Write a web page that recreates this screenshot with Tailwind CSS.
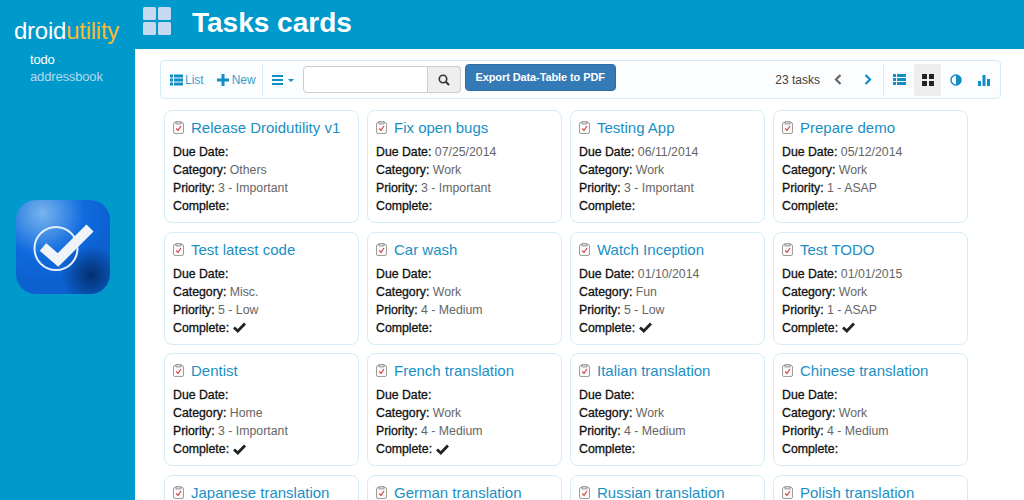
<!DOCTYPE html>
<html lang="en">
  <head>
    <meta charset="UTF-8" />
    <title>Tasks cards</title>
    <script src="https://cdn.jsdelivr.net/npm/@tailwindcss/browser@4"></script>
  </head>
  <body class="h-[500px] overflow-hidden bg-[#0099cc] font-['Liberation_Sans',Arial,sans-serif] text-[13px] text-[#333]">
    <div class="flex h-[500px]">

      <!-- Sidebar -->
      <aside class="w-[135px] shrink-0 flex flex-col">
        <div class="pl-[14px] pt-[16px] text-[24px] leading-[30px] tracking-[-0.25px] text-white">droid<span class="text-[#f5b936]">utility</span></div>
        <div class="pl-[30px] pt-[5px] text-[13px] leading-[17px] tracking-[-0.15px]">
          <div class="text-white">todo</div>
          <div class="text-[#b5d9ee]">addressbook</div>
        </div>
        <!-- App icon -->
        <div class="pl-[16px] pt-[115px]">
          <svg width="94" height="94" viewBox="0 0 94 94">
            <defs>
              <radialGradient id="shine" cx="0.28" cy="0.14" r="0.75">
                <stop offset="0" stop-color="#78b4ee" />
                <stop offset="0.6" stop-color="#0f6bde" />
                <stop offset="1" stop-color="#0c60d0" />
              </radialGradient>
              <radialGradient id="shade" cx="0.8" cy="0.8" r="0.32">
                <stop offset="0" stop-color="#02275f" stop-opacity="0.85" />
                <stop offset="1" stop-color="#02275f" stop-opacity="0" />
              </radialGradient>
            </defs>
            <rect width="94" height="94" rx="20" fill="url(#shine)" />
            <rect width="94" height="94" rx="20" fill="url(#shade)" />
            <circle cx="40" cy="48.500" r="21.500" fill="none" stroke="#e4eefa" stroke-width="2" />
            <path d="M27 47 L42 60 L74 28" fill="none" stroke="#f0f3f7" stroke-width="10" />
          </svg>
        </div>
      </aside>

      <div class="flex-1 min-w-0 flex flex-col">
        <!-- Header -->
        <header class="h-[49px] shrink-0 flex items-start pl-[8px] pt-[7px]">
          <svg width="28" height="28" viewBox="0 0 28 28" fill="#c6d9f0">
            <rect x="0" y="0" width="13" height="13" rx="1.500" />
            <rect x="15" y="0" width="13" height="13" rx="1.500" />
            <rect x="0" y="15" width="13" height="13" rx="1.500" />
            <rect x="15" y="15" width="13" height="13" rx="1.500" />
          </svg>
          <h1 class="ml-[21px] text-[28px] leading-[32px] font-bold text-white">Tasks cards</h1>
        </header>

        <main class="flex-1 bg-white overflow-hidden pl-[25px] pt-[11px]">
          <!-- Toolbar -->
          <div class="w-[841px] h-[39px] flex items-center border border-[#d3edf6] rounded-[4px] bg-[#fbfdfe] text-[#0f8fc6]">
            <div class="flex items-center pl-[9px] h-full">
              <svg width="13" height="12" viewBox="0 0 13 12" fill="#0f8fc6"><rect y="0.500" width="3" height="3"/><rect y="4.500" width="3" height="3"/><rect y="8.500" width="3" height="3"/><rect x="4" y="0.500" width="9" height="3"/><rect x="4" y="4.500" width="9" height="3"/><rect x="4" y="8.500" width="9" height="3"/></svg>
              <span class="ml-[2px] text-[12px] text-[#3d9fcc]">List</span>
              <svg class="ml-[13px]" width="12" height="12" viewBox="0 0 12 12" fill="#0f8fc6"><rect x="4.500" y="0" width="3" height="12"/><rect x="0" y="4.500" width="12" height="3"/></svg>
              <span class="ml-[3px] text-[12px] text-[#3d9fcc]">New</span>
            </div>
            <div class="ml-[6px] w-px h-[32px] bg-[#d3edf6]"></div>
            <div class="flex items-center ml-[9px]">
              <svg width="11" height="10" viewBox="0 0 11 10" fill="#0f8fc6"><rect width="11" height="2"/><rect y="4" width="11" height="2"/><rect y="8" width="11" height="2"/></svg>
              <svg class="ml-[5px] mt-[2px]" width="6" height="3" viewBox="0 0 6 3" fill="#0f8fc6"><path d="M0 0H6L3 3Z"/></svg>
            </div>
            <div class="ml-[9px] flex h-[27px] w-[158px]">
              <div class="w-[125px] bg-white border border-[#ccc] rounded-l-[4px]"></div>
              <div class="flex-1 flex items-center justify-center bg-[#eee] border border-l-0 border-[#ccc] rounded-r-[4px]">
                <svg width="12" height="12" viewBox="0 0 12 12" fill="none" stroke="#333" stroke-width="1.600"><circle cx="5" cy="5" r="3.700"/><path d="M7.800 7.800L11 11" stroke-width="2"/></svg>
              </div>
            </div>
            <button class="ml-[4px] mb-[5px] h-[27px] w-[151px] bg-[#337ab7] border border-[#2e6da4] rounded-[4px] text-[11px] tracking-[-0.1px] font-bold text-white">Export Data-Table to PDF</button>

            <span class="ml-auto text-[12px] text-[#444]">23 tasks</span>
            <svg class="ml-[14px]" width="8" height="11" viewBox="0 0 8 11" fill="none" stroke="#666" stroke-width="2.200"><path d="M6.500 1L2 5.500L6.500 10"/></svg>
            <svg class="ml-[22px]" width="8" height="11" viewBox="0 0 8 11" fill="none" stroke="#0f8fc6" stroke-width="2.200"><path d="M1.500 1L6 5.500L1.500 10"/></svg>
            <div class="ml-[11px] w-px h-[32px] bg-[#d3edf6]"></div>
            <div class="w-[30px] h-[32px] flex items-center justify-center">
              <svg width="13" height="11" viewBox="0 0 13 11" fill="#0f8fc6"><rect y="0" width="3" height="3"/><rect y="4" width="3" height="3"/><rect y="8" width="3" height="3"/><rect x="4" y="0" width="9" height="3"/><rect x="4" y="4" width="9" height="3"/><rect x="4" y="8" width="9" height="3"/></svg>
            </div>
            <div class="w-[27px] h-[32px] flex items-center justify-center bg-[#eee] rounded-[3px]">
              <svg width="12" height="12" viewBox="0 0 12 12" fill="#222"><rect width="5" height="5"/><rect x="7" width="5" height="5"/><rect y="7" width="5" height="5"/><rect x="7" y="7" width="5" height="5"/></svg>
            </div>
            <div class="w-[29px] h-[32px] flex items-center justify-center">
              <svg width="12" height="12" viewBox="0 0 12 12"><circle cx="6" cy="6" r="5" fill="none" stroke="#0f8fc6" stroke-width="1.500"/><path d="M6 1A5 5 0 0 1 6 11Z" fill="#0f8fc6"/></svg>
            </div>
            <div class="w-[28px] h-[32px] flex items-center justify-center mr-[2px]">
              <svg width="12" height="12" viewBox="0 0 12 12" fill="#0f8fc6"><rect x="0" y="7" width="3" height="5"/><rect x="4.500" y="1" width="3" height="11"/><rect x="9" y="5" width="3" height="7"/></svg>
            </div>
          </div>

          <!-- Cards -->
          <div id="cards" class="grid grid-cols-[repeat(4,195px)] gap-x-[8px] gap-y-[8.500px] pl-[4px] pt-[11px]"></div>
        </main>
      </div>
    </div>

    <script>
      // title, due date, category, priority, complete
      const tasks = [
        ["Release Droidutility v1", "", "Others", "3 - Important", false],
        ["Fix open bugs", "07/25/2014", "Work", "3 - Important", false],
        ["Testing App", "06/11/2014", "Work", "3 - Important", false],
        ["Prepare demo", "05/12/2014", "Work", "1 - ASAP", false],
        ["Test latest code", "", "Misc.", "5 - Low", true],
        ["Car wash", "", "Work", "4 - Medium", false],
        ["Watch Inception", "01/10/2014", "Fun", "5 - Low", true],
        ["Test TODO", "01/01/2015", "Work", "1 - ASAP", true],
        ["Dentist", "", "Home", "3 - Important", true],
        ["French translation", "", "Work", "4 - Medium", true],
        ["Italian translation", "", "Work", "4 - Medium", false],
        ["Chinese translation", "", "Work", "4 - Medium", false],
        ["Japanese translation", "", "Work", "4 - Medium", false],
        ["German translation", "", "Work", "4 - Medium", false],
        ["Russian translation", "", "Work", "4 - Medium", false],
        ["Polish translation", "", "Work", "4 - Medium", false],
      ];

      const clipboard = `<svg class="mt-[3px] shrink-0" width="11" height="13" viewBox="0 0 11 13" fill="none">
        <rect x="0.500" y="1.500" width="10" height="11" rx="1.500" fill="#fafafa" stroke="#a09c98"/>
        <rect x="3" y="0.500" width="5" height="2.500" fill="#d8d4d0" stroke="#888" stroke-width="0.700"/>
        <path d="M3.300 7.500L5 9.300L8 5" stroke="#d8363c" stroke-width="1.100"/>
      </svg>`;

      const tick = `<svg class="inline-block ml-[1px] mb-[1px]" width="13" height="11" viewBox="0 0 13 11" fill="none" stroke="#222" stroke-width="2.800"><path d="M1 5.500L4.800 9L12 1.500"/></svg>`;

      document.getElementById("cards").innerHTML = tasks.map(t => `
        <div class="h-[113px] border border-[#d3edf6] rounded-[8px] bg-white pl-[8px] pt-[7px]">
          <div class="flex items-start h-[22px]">
            ${clipboard}
            <span class="ml-[7px] text-[15px] leading-[20px] text-[#1a8fc4] whitespace-nowrap">${t[0]}</span>
          </div>
          <div class="mt-[3px] text-[12.300px] leading-[18px] text-[#666] whitespace-nowrap">
            <div><b class="font-normal text-[#111] [-webkit-text-stroke:0.3px]">Due Date:</b> ${t[1]}</div>
            <div><b class="font-normal text-[#111] [-webkit-text-stroke:0.3px]">Category:</b> ${t[2]}</div>
            <div><b class="font-normal text-[#111] [-webkit-text-stroke:0.3px]">Priority:</b> ${t[3]}</div>
            <div><b class="font-normal text-[#111] [-webkit-text-stroke:0.3px]">Complete:</b> ${t[4] ? tick : ""}</div>
          </div>
        </div>`).join("");
    </script>
  </body>
</html>
